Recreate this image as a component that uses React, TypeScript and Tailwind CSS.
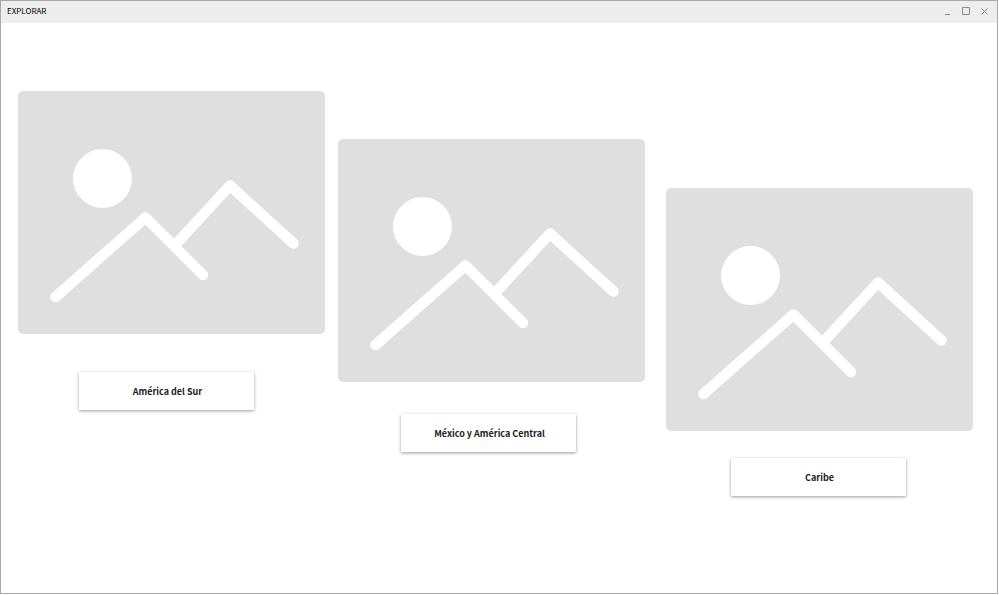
import React from "react";

function Placeholder({ label }: { label: string }) {
  return (
    <svg viewBox="0 0 307 243" className="block w-full" role="img" aria-label={label}>
      <rect width="307" height="243" rx="5" fill="#dfdfdf" />
      <circle cx="84.5" cy="87.5" r="29.5" fill="#fff" />
      <g fill="none" stroke="#fff" strokeWidth="10.5" strokeLinecap="round" strokeLinejoin="round">
        <path d="M37.5 206L127.5 126.5L185 184" />
        <path d="M159 152L212 94.5L275.5 152.5" />
      </g>
    </svg>
  );
}

interface Region {
  name: string;
  card: string;
  button: string;
}

const regions: Region[] = [
  { name: "América del Sur", card: "", button: "mt-[38px] ml-[61px]" },
  { name: "México y América Central", card: "mt-12 ml-[13px]", button: "mt-8 ml-[63px]" },
  { name: "Caribe", card: "mt-[97px] ml-[21px]", button: "mt-[27px] ml-[65px]" },
];

const control =
  "flex h-5 w-[18px] items-center justify-center text-[#8a8a8a] hover:bg-[#dddddd]";

export default function App() {
  return (
    <div className="flex min-h-screen bg-white pr-px pb-px font-['Noto_Sans_CJK_SC','Open_Sans',sans-serif] text-[#222222]">
      <div className="flex flex-1 flex-col border border-[#a9a9a9]">
        <header className="flex h-[22px] items-start justify-between bg-[#ededed] pr-1 pl-[6px]">
          <h1 className="pt-1 text-[8px] leading-3 text-black">EXPLORAR</h1>
          <div className="flex">
            <button type="button" aria-label="Minimizar" className={control}>
              <svg width="10" height="10" viewBox="0 0 10 10" fill="none" stroke="currentColor">
                <path d="M2 8.5H7" />
              </svg>
            </button>
            <button type="button" aria-label="Maximizar" className={control}>
              <svg width="10" height="10" viewBox="0 0 10 10" fill="none" stroke="currentColor">
                <path d="M1.5 1.5H8.5V8.5H1.5Z" />
              </svg>
            </button>
            <button type="button" aria-label="Cerrar" className={control}>
              <svg width="10" height="10" viewBox="0 0 10 10" fill="none" stroke="currentColor">
                <path d="M2.5 2.5L8.5 8.5M8.5 2.5L2.5 8.5" />
              </svg>
            </button>
          </div>
        </header>
        <main className="flex flex-1 items-start pt-[68px] pr-6 pb-8 pl-[17px]">
          {regions.map((region) => (
            <section key={region.name} className={`min-w-0 flex-1 ${region.card}`}>
              <Placeholder label={region.name} />
              <button
                type="button"
                className={`block h-[38px] w-[175px] bg-white pt-[2px] pl-[2px] text-[9px] leading-4 font-bold shadow-[0_1px_3px_rgba(0,0,0,0.4)] ${region.button}`}
              >
                {region.name}
              </button>
            </section>
          ))}
        </main>
      </div>
    </div>
  );
}
